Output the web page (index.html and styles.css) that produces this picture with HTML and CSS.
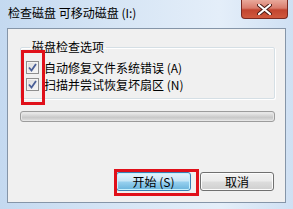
FILE: index.html
```html
<!DOCTYPE html>
<html lang="zh-CN">
<head>
<meta charset="utf-8">
<title>检查磁盘</title>
<link rel="stylesheet" href="styles.css">
</head>
<body>
<div class="window">
  <div class="titlebar">
    <span class="title">检查磁盘 可移动磁盘 (I:)</span>
    <span class="close">
      <svg width="15" height="11" viewBox="0 0 15 11">
        <path d="M2 1 L13 10 M13 1 L2 10" stroke="#4a1a14" stroke-width="4" stroke-linecap="round"/>
        <path d="M2 1 L13 10 M13 1 L2 10" stroke="#ffffff" stroke-width="2.2" stroke-linecap="round"/>
      </svg>
    </span>
  </div>
  <div class="client">
    <fieldset class="group">
      <legend class="legend">磁盘检查选项</legend>
      <label class="row"><span class="cb"><svg width="9" height="9" viewBox="0 0 9 9"><path d="M1 4.5 L3.5 7.5 L8 1" fill="none" stroke="#4a5f97" stroke-width="1.8"/></svg></span><span>自动修复文件系统错误 (A)</span></label>
      <label class="row"><span class="cb"><svg width="9" height="9" viewBox="0 0 9 9"><path d="M1 4.5 L3.5 7.5 L8 1" fill="none" stroke="#4a5f97" stroke-width="1.8"/></svg></span><span>扫描并尝试恢复坏扇区 (N)</span></label>
    </fieldset>
    <div class="progress"></div>
    <div class="buttons">
      <button class="btn default">开始 (S)</button>
      <button class="btn">取消</button>
    </div>
  </div>
  <div class="mark mark-checks"></div>
  <div class="mark mark-start"></div>
</div>
</body>
</html>
```
FILE: styles.css
```css
html, body {
  margin: 0;
  padding: 0;
}
body {
  width: 293px;
  height: 209px;
  overflow: hidden;
  font-family: "Noto Sans CJK SC", "DejaVu Sans", sans-serif;
  font-size: 12px;
  color: #000;
}
.window {
  position: relative;
  box-sizing: border-box;
  width: 293px;
  height: 209px;
  display: flex;
  flex-direction: column;
  padding: 0 7px 6px 7px;
  background: linear-gradient(90deg, #c4d9f0 0%, #d6e5f5 40%, #e4eef9 75%, #cfe0f3 100%);
}
.titlebar {
  height: 28px;
  display: flex;
  justify-content: space-between;
  align-items: flex-start;
}
.title {
  padding: 6px 0 0 1px;
  line-height: 14px;
  font-size: 12px;
  color: #000;
}
.close {
  width: 47px;
  height: 19px;
  box-sizing: border-box;
  margin-right: -2px;
  border: 1px solid #7a2a22;
  border-top: none;
  border-radius: 0 0 4px 4px;
  background: linear-gradient(#e9a99b 0%, #d97c6c 45%, #c2452f 55%, #d0593e 100%);
  display: flex;
  align-items: center;
  justify-content: center;
}
.client {
  flex: 1;
  border: 1px solid #8595a8;
  background: #f0f0f0;
  display: flex;
  flex-direction: column;
  padding: 0 10px 0 12px;
}
.group {
  margin: 12px 0 0 0;
  padding: 6px 0 5px 5px;
  border: 1px solid #d5dfe5;
  border-radius: 2px;
  box-shadow: inset 1px 1px 0 #fff, 1px 1px 0 #fff;
  min-width: 0;
}
.legend {
  padding: 0 2px;
  margin-left: 4px;
  line-height: 12px;
  font-size: 12px;
  color: #000;
}
.row {
  display: flex;
  align-items: center;
  gap: 5px;
  height: 17px;
  line-height: 17px;
}
.cb {
  width: 13px;
  height: 13px;
  box-sizing: border-box;
  border: 1px solid #8f8f8f;
  background: linear-gradient(135deg, #dcdcdc, #f8f8f8);
  box-shadow: inset 0 0 0 1px #f4f4f4;
  display: flex;
  align-items: center;
  justify-content: center;
}
.progress {
  margin-top: 12px;
  height: 11px;
  box-sizing: border-box;
  border: 1px solid #9c9c9c;
  border-radius: 3px;
  background: linear-gradient(#f0f0f0 0%, #d9d9d9 35%, #c9c9c9 60%, #e0e0e0 100%);
  box-shadow: inset 0 0 0 1px #e6e6e6;
}
.buttons {
  margin-top: auto;
  margin-bottom: 11px;
  display: flex;
  justify-content: flex-end;
  gap: 9px;
  padding-right: 1px;
}
.btn {
  width: 74px;
  height: 19px;
  box-sizing: border-box;
  border: 1px solid #707070;
  border-radius: 3px;
  background: linear-gradient(#f2f2f2 0%, #ebebeb 48%, #dddddd 52%, #cfcfcf 100%);
  box-shadow: inset 0 0 0 1px #fcfcfc;
  font-family: inherit;
  font-size: 12px;
  line-height: 15px;
  padding: 0;
  color: #000;
}
.btn.default {
  width: 75px;
  border-color: #3c7fb1;
  background: linear-gradient(#e5f4fc 0%, #c4e5f6 48%, #98d1ef 52%, #68b3db 100%);
  box-shadow: inset 0 0 0 1px #c5f0fe;
}
.mark {
  position: absolute;
  box-sizing: border-box;
  border: 3px solid #e0101a;
}
.mark-checks {
  left: 21px;
  top: 50px;
  width: 24px;
  height: 55px;
}
.mark-start {
  left: 114px;
  top: 169px;
  width: 85px;
  height: 27px;
}
```
